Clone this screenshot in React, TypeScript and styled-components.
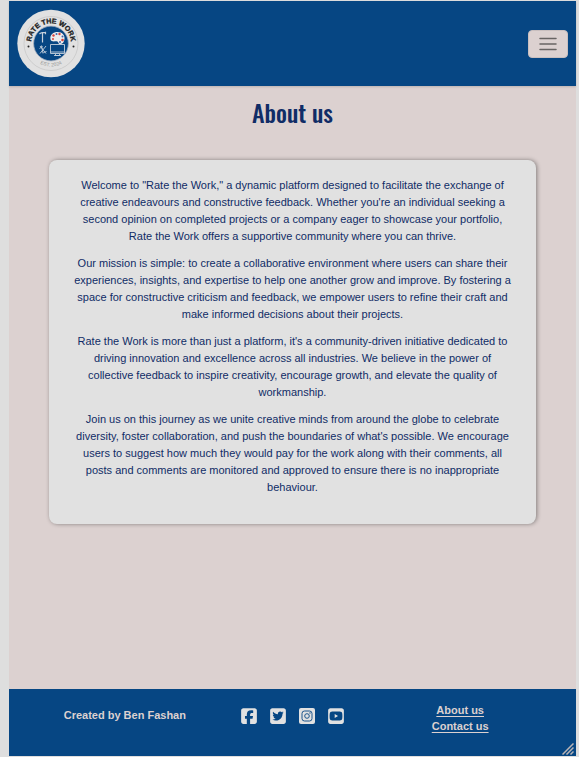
import React from "react";
import styled, { createGlobalStyle } from "styled-components";
import {
  FaSquareFacebook,
  FaSquareTwitter,
  FaSquareYoutube,
} from "react-icons/fa6";

const colors = {
  navy: "#064683",
  ink: "#102c66",
  blush: "#dcd1d0",
  paper: "#e1e1e1",
  frame: "#dedede",
};

const GlobalStyle = createGlobalStyle`
  *, *::before, *::after { box-sizing: border-box; }
  body {
    margin: 0;
    background: ${colors.frame};
    color: ${colors.ink};
    font-family: "Liberation Sans", Arial, Helvetica, sans-serif;
    font-size: 11px;
    line-height: 17px;
  }
`;

const Frame = styled.div`
  min-height: 100vh;
  padding: 1px 3px 1px 9px;
  display: flex;
`;

const Page = styled.div`
  position: relative;
  flex: 1;
  min-width: 0;
  display: flex;
  flex-direction: column;
  background: ${colors.blush};
`;

const Header = styled.header`
  display: flex;
  align-items: center;
  justify-content: space-between;
  padding: 8px;
  background: ${colors.navy};
  box-shadow: 0 1px 2px rgba(0, 0, 0, 0.15);
`;

const HomeLink = styled.a`
  display: block;
  height: 69px;
`;

const MenuButton = styled.button`
  display: grid;
  place-items: center;
  width: 40px;
  height: 28px;
  padding: 0;
  border: 1px solid #c9bfbf;
  border-radius: 4px;
  background: ${colors.blush};
`;

const Main = styled.main`
  flex: 1;
  padding: 8px 40px 40px;
`;

const Title = styled.h1`
  margin: 0 0 30px;
  font-family: Oswald, "Liberation Sans Narrow", "Liberation Sans", sans-serif;
  font-size: 24px;
  font-weight: 500;
  line-height: 36px;
  text-align: center;
`;

const Card = styled.section`
  padding: 17px 22px 18px;
  border-radius: 8px;
  background: ${colors.paper};
  box-shadow: 1px 0 4px rgba(0, 0, 0, 0.4);
  text-align: center;
`;

const Paragraph = styled.p`
  margin: 0 0 10px;
`;

const Footer = styled.footer`
  display: grid;
  grid-template-columns: repeat(3, 1fr);
  align-items: start;
  padding: 13px 32px 22px;
  background: ${colors.navy};
  color: ${colors.blush};
  font-weight: 700;
  text-align: center;
`;

const Credit = styled.p`
  margin: 5px 0 0;
`;

const Socials = styled.nav`
  display: flex;
  justify-content: center;
  gap: 13px;
  padding-top: 5px;
`;

const SocialLink = styled.a`
  display: flex;
  justify-content: center;
  width: 16px;
  color: ${colors.paper};
  font-size: 18px;

  svg { flex: none; }
`;

const FooterLinks = styled.nav`
  display: flex;
  flex-direction: column;
  align-items: center;
`;

const FooterLink = styled.a`
  color: inherit;
  line-height: 16px;
  text-underline-offset: 2px;
`;

const Grip = styled.svg`
  position: absolute;
  right: 2px;
  bottom: 1px;
`;

function Logo() {
  return (
    <svg width="69" height="69" viewBox="0 0 69 69" role="img" aria-label="Rate the Work">
      <defs>
        <path id="upper-arc" d="M14 34.5a20 20 0 0 1 40 0" />
        <path id="lower-arc" d="M11 34.5a23 23 0 0 0 46 0" />
      </defs>
      <circle cx="34" cy="34.5" r="33.7" fill={colors.paper} />
      <circle cx="34" cy="34.5" r="27" fill="none" stroke="#c4c4c4" strokeWidth="0.7" />
      <circle cx="34" cy="34.5" r="17.4" fill={colors.navy} stroke="#a9b3c1" strokeWidth="0.8" />
      <text fontSize="7" fontWeight="700" fill="#1c1c1c" stroke="#1c1c1c" strokeWidth="0.3" textAnchor="middle">
        <textPath href="#upper-arc" startOffset="50%">RATE THE WORK</textPath>
      </text>
      <text fontSize="5" fill="#999" textAnchor="middle">
        <textPath href="#lower-arc" startOffset="50%">EST. 2024</textPath>
      </text>
      <circle cx="11.5" cy="37.5" r="1" fill="#222" />
      <circle cx="56.5" cy="37.5" r="1" fill="#222" />
      <g fill="none" stroke="#c5d0dc">
        <path d="M22.500 25q1.500-1.500 3-1.300h3.500M28.500 22.700v2.500M25.500 24v9.500" strokeWidth="1.2" />
        <path d="M23 37l6 7.500M29 37L23 44.5M22.5 39.5l3-2M26.500 43.5l3-1M24.5 36.5l1.500 8" strokeWidth="0.9" />
        <path d="M33.500 35.500h14v9h-14zM33.500 43h14M38.500 45v1.500h4v-1.500M37 46.500h7" strokeWidth="0.9" />
      </g>
      <g transform="translate(-1.500 0.500)">
        <path d="M35 30c-1-5 3-7.500 7-7.500 5 0 7.500 3.500 7 7-.3 3-2 5-4.500 5-2 0-1.200-2-2.700-2.500-2-.6-6 1-6.800-2z" fill="#ededed" />
        <g fill="#d8433c">
          <circle cx="38" cy="26" r="1.200" />
          <circle cx="44" cy="24.500" r="1.200" />
          <circle cx="47" cy="30.500" r="1.300" />
          <circle cx="37.500" cy="29.500" r="1" />
        </g>
        <g fill="#3d61a8">
          <circle cx="41" cy="24.500" r="1" />
          <circle cx="47" cy="27" r="1" />
          <circle cx="44.500" cy="32.500" r="1" />
        </g>
      </g>
    </svg>
  );
}

function InstagramIcon() {
  return (
    <svg width="16" height="18" viewBox="0 0 16 18" aria-hidden="true">
      <rect y="1" width="16" height="16" rx="2" fill="currentColor" />
      <g fill="none" stroke={colors.navy} strokeWidth="0.9">
        <rect x="3" y="4" width="10" height="10" rx="2.500" />
        <circle cx="8" cy="9" r="2.300" />
      </g>
      <circle cx="11" cy="6" r="0.700" fill={colors.navy} />
    </svg>
  );
}

const paragraphs = [
  "Welcome to \"Rate the Work,\" a dynamic platform designed to facilitate the exchange of creative endeavours and constructive feedback. Whether you're an individual seeking a second opinion on completed projects or a company eager to showcase your portfolio, Rate the Work offers a supportive community where you can thrive.",
  "Our mission is simple: to create a collaborative environment where users can share their experiences, insights, and expertise to help one another grow and improve. By fostering a space for constructive criticism and feedback, we empower users to refine their craft and make informed decisions about their projects.",
  "Rate the Work is more than just a platform, it's a community-driven initiative dedicated to driving innovation and excellence across all industries. We believe in the power of collective feedback to inspire creativity, encourage growth, and elevate the quality of workmanship.",
  "Join us on this journey as we unite creative minds from around the globe to celebrate diversity, foster collaboration, and push the boundaries of what's possible. We encourage users to suggest how much they would pay for the work along with their comments, all posts and comments are monitored and approved to ensure there is no inappropriate behaviour.",
];

const socials = [
  { name: "Facebook", Icon: FaSquareFacebook },
  { name: "Twitter", Icon: FaSquareTwitter },
  { name: "Instagram", Icon: InstagramIcon },
  { name: "YouTube", Icon: FaSquareYoutube },
];

export default function App() {
  return (
    <>
      <GlobalStyle />
      <Frame>
        <Page>
          <Header>
            <HomeLink href="#"><Logo /></HomeLink>
            <MenuButton type="button" aria-label="Toggle navigation">
              <svg width="18" height="14" viewBox="0 0 18 14" stroke="#686463" strokeWidth="1.500">
                <path d="M1 1.500h16M1 7h16M1 12.500h16" strokeLinecap="round" />
              </svg>
            </MenuButton>
          </Header>
          <Main>
            <Title>About us</Title>
            <Card>
              {paragraphs.map((text) => <Paragraph key={text}>{text}</Paragraph>)}
            </Card>
          </Main>
          <Footer>
            <Credit>Created by Ben Fashan</Credit>
            <Socials aria-label="Social media">
              {socials.map(({ name, Icon }) => (
                <SocialLink key={name} href="#" aria-label={name}><Icon /></SocialLink>
              ))}
            </Socials>
            <FooterLinks aria-label="Footer">
              <FooterLink href="#">About us</FooterLink>
              <FooterLink href="#">Contact us</FooterLink>
            </FooterLinks>
          </Footer>
          <Grip width="12" height="12" viewBox="0 0 12 12" stroke="#b9b4b6" strokeWidth="1.500" aria-hidden="true">
            <path d="M0.500 11.500l11-11M4.500 11.500l7-7M8.500 11.500l3-3" />
          </Grip>
        </Page>
      </Frame>
    </>
  );
}
